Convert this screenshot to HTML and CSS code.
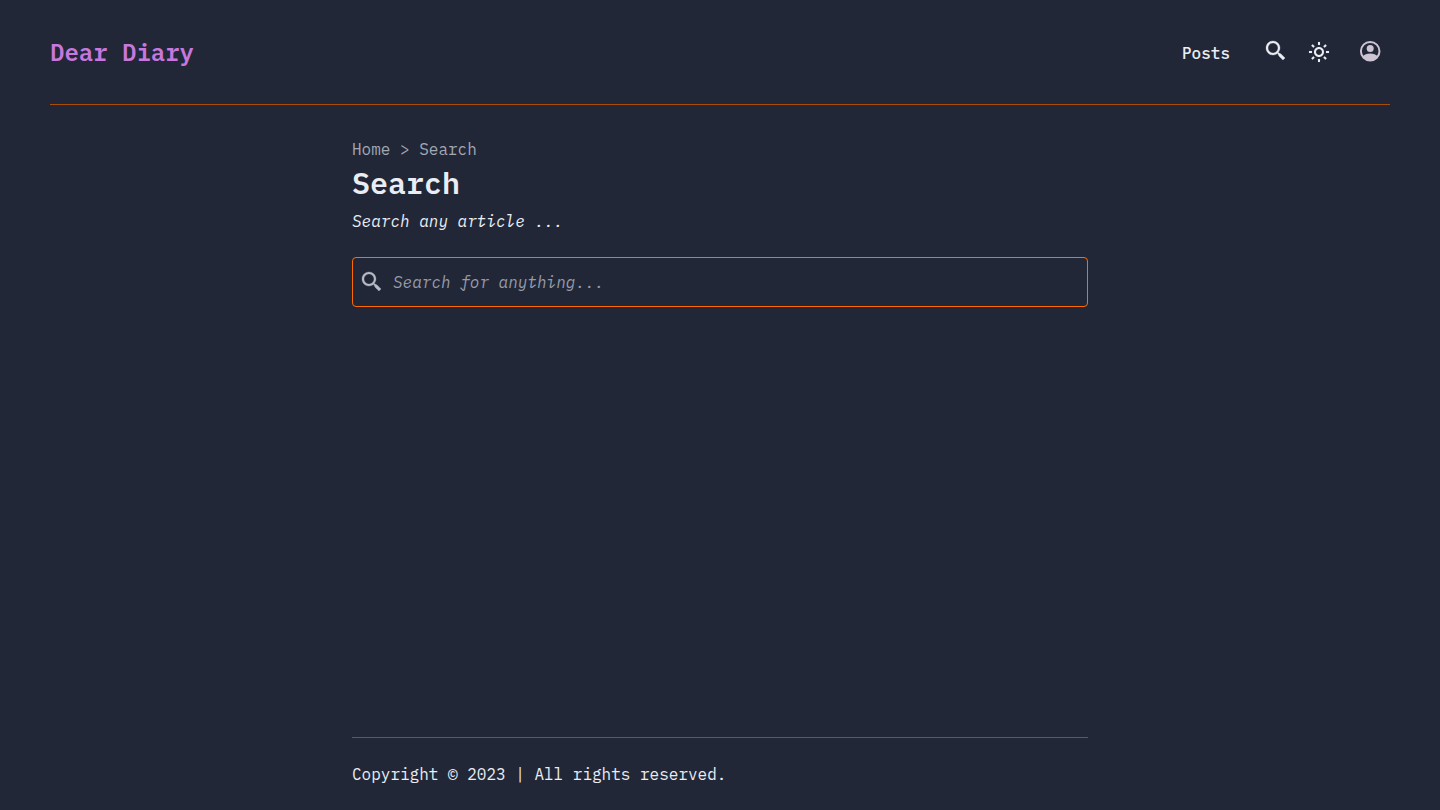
FILE: index.html
```html
<!DOCTYPE html>
<html lang="en">
<head>
<meta charset="utf-8">
<meta name="viewport" content="width=device-width, initial-scale=1">
<title>Search | Dear Diary</title>
<link rel="stylesheet" href="styles.css">
</head>
<body>
<svg class="sprite" aria-hidden="true">
  <symbol id="icon-search" viewBox="0 0 24 24"><path d="M19.023 16.977a35.13 35.13 0 0 1-1.367-1.384c-.372-.378-.596-.653-.596-.653l-2.8-1.337A6.962 6.962 0 0 0 16 9c0-3.859-3.14-7-7-7S2 5.141 2 9s3.14 7 7 7c1.763 0 3.37-.66 4.603-1.739l1.337 2.8s.275.224.653.596c.387.363.896.854 1.384 1.367l1.358 1.392.604.646 2.121-2.121-.646-.604c-.379-.372-.885-.866-1.391-1.36zM9 14c-2.757 0-5-2.243-5-5s2.243-5 5-5 5 2.243 5 5-2.243 5-5 5z" stroke="currentColor" stroke-width=".3"/></symbol>
</svg>
<header class="site-header">
  <a class="logo" href="#">Dear Diary</a>
  <nav class="nav" aria-label="Main">
    <a class="nav-link" href="#">Posts</a>
    <a class="nav-search" href="#" aria-label="Search"><svg class="icon"><use href="#icon-search"/></svg></a>
    <button class="icon-button theme-button" type="button" aria-label="Toggle theme">
      <svg class="icon" viewBox="0 0 24 24"><path d="M6.993 12c0 2.761 2.246 5.007 5.007 5.007s5.007-2.246 5.007-5.007S14.761 6.993 12 6.993 6.993 9.239 6.993 12zM12 8.993c1.658 0 3.007 1.349 3.007 3.007S13.658 15.007 12 15.007 8.993 13.658 8.993 12 10.342 8.993 12 8.993zM10.998 19h2v3h-2zm0-17h2v3h-2zm-9 9h3v2h-3zm17 0h3v2h-3zM4.219 18.363l2.12-2.122 1.415 1.414-2.12 2.122zM16.24 6.344l2.122-2.122 1.414 1.414-2.122 2.122zM6.342 7.759 4.22 5.637l1.415-1.414 2.12 2.122zm13.434 10.605-1.414 1.414-2.122-2.122 1.414-1.414z" stroke="currentColor" stroke-width=".1"/></svg>
    </button>
    <button class="icon-button account-button" type="button" aria-label="Account">
      <svg class="icon" viewBox="0 0 24 24"><circle cx="12.200" cy="12.200" r="9.300" fill="none" stroke="currentColor" stroke-width="2"/><circle cx="12.200" cy="9.600" r="3.500"/><path d="M4.600 17.600C6.200 15.400 9 14.500 12.200 14.500s6 .9 7.600 3.100A9.500 9.500 0 0 1 12.200 22a9.500 9.500 0 0 1-7.600-4.400z"/></svg>
    </button>
  </nav>
</header>
<main class="content">
  <nav class="breadcrumb" aria-label="Breadcrumb"><a href="#">Home</a> &gt; <span>Search</span></nav>
  <h1 class="title">Search</h1>
  <p class="intro">Search any article ...</p>
  <label class="search-box">
    <svg class="icon search-icon" aria-hidden="true"><use href="#icon-search"/></svg>
    <input class="search-input" type="text" placeholder="Search for anything..." aria-label="Search for anything">
  </label>
</main>
<footer class="site-footer">Copyright © 2023 | All rights reserved.</footer>
</body>
</html>
```

FILE: styles.css
```css
* {
  box-sizing: border-box;
  margin: 0;
}

body {
  display: flex;
  flex-direction: column;
  min-height: 100vh;
  background: #212737;
  color: #eaedf3;
  font: 16px/24px "IBM Plex Mono", "Liberation Mono", monospace;
}

a {
  color: inherit;
  text-decoration: none;
}

.sprite {
  display: none;
}

.icon {
  display: block;
  width: 24px;
  height: 24px;
  fill: currentColor;
}

.site-header {
  display: flex;
  align-items: center;
  justify-content: space-between;
  height: 105px;
  margin: 0 50px;
  border-bottom: 1px solid #ab4b08;
}

.logo {
  color: #c678dd;
  font-size: 24px;
  font-weight: 600;
  line-height: 32px;
}

.nav {
  display: flex;
  align-items: center;
  padding-right: 8px;
}

.nav-link {
  padding-top: 2px;
  font-weight: 500;
}

.nav-search {
  padding-bottom: 2px;
  margin-left: 34px;
}

.icon-button {
  padding: 0;
  border: 0;
  background: none;
  color: inherit;
}

.theme-button {
  margin-left: 19px;
}

.account-button {
  padding-bottom: 2px;
  margin-left: 27px;
  color: #cdc4d3;
}

.content,
.site-footer {
  width: calc(100% - 32px);
  max-width: 736px;
  margin: 0 auto;
}

.content {
  flex: 1;
  padding: 32px 0 16px;
}

.breadcrumb {
  color: #a4a8b2;
}

.title {
  margin-top: 4px;
  font-size: 30px;
  font-weight: 600;
  line-height: 36px;
}

.intro {
  margin: 8px 0 24px;
  font-style: italic;
}

.search-box {
  display: flex;
  align-items: center;
  gap: 9px;
  height: 50px;
  padding: 0 7px;
  border: 1px solid #ff6b01;
  border-radius: 4px;
}

.search-icon {
  flex: none;
  color: #b8bbc4;
}

.search-input {
  flex: 1;
  min-width: 0;
  padding: 0;
  border: 0;
  outline: 0;
  background: none;
  color: inherit;
  font: inherit;
}

.search-input::placeholder {
  color: #969ba8;
  font-style: italic;
  opacity: 1;
}

.site-footer {
  padding: 24px 0;
  border-top: 1px solid #98491a;
}
```
